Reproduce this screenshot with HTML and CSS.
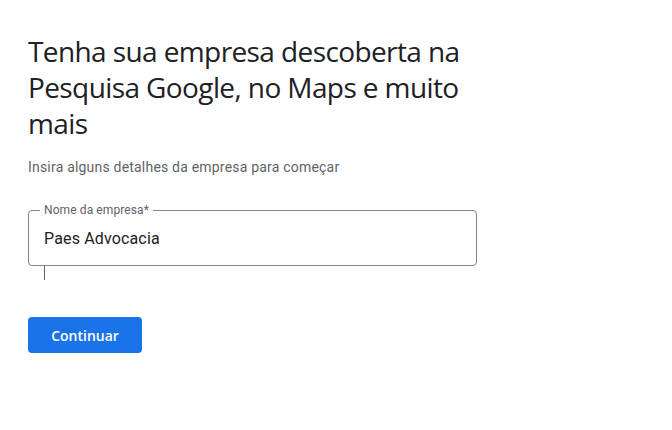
FILE: index.html
```html
<!DOCTYPE html>
<html lang="pt">
<head>
<meta charset="utf-8">
<link rel="stylesheet" href="styles.css">
</head>
<body>
<main class="page">
  <h1 class="title">Tenha sua empresa descoberta na Pesquisa Google, no Maps e muito mais</h1>
  <p class="subtitle">Insira alguns detalhes da empresa para começar</p>
  <div class="field">
    <fieldset class="outline">
      <legend class="label">Nome da empresa*</legend>
      <div class="value">Paes Advocacia</div>
    </fieldset>
    <div class="tick"></div>
  </div>
  <button class="btn">Continuar</button>
</main>
</body>
</html>
```
FILE: styles.css
```css
html, body { margin: 0; padding: 0; background: #fff; }
.page {
  padding: 33px 28px 0 28px;
  width: 449px;
  font-family: Roboto, "Liberation Sans", sans-serif;
}
.title {
  margin: 0;
  font-family: "Open Sans", Roboto, sans-serif;
  font-weight: 400;
  font-size: 28px;
  line-height: 36px;
  color: #202124;
  letter-spacing: -0.6px;
  width: 470px;
}
.subtitle {
  margin: 16px 0 0 0;
  font-size: 14px;
  line-height: 20px;
  letter-spacing: 0.2px;
  color: #5f6368;
}
.field { margin-top: 27px; }
.outline {
  margin: 0;
  padding: 0 15px 0 15px;
  border: 1px solid #80868b;
  border-radius: 4px;
  height: 62px;
  box-sizing: border-box;
}
.label {
  padding: 0 4px;
  margin-left: -4px;
  font-size: 12px;
  line-height: 12px;
  letter-spacing: 0.1px;
  color: #5f6368;
}
.value {
  font-size: 16px;
  line-height: 24px;
  letter-spacing: 0.15px;
  color: #202124;
  margin-top: 11px;
}
.tick {
  margin-left: 16px;
  width: 1px;
  height: 14px;
  background: #5f6368;
}
.btn {
  margin-top: 37px;
  display: block;
  width: 114px;
  height: 36px;
  border: 0;
  border-radius: 4px;
  background: #1a73e8;
  color: #fff;
  font-family: "Open Sans", Roboto, sans-serif;
  font-weight: 600;
  font-size: 14px;
  cursor: pointer;
}
```
